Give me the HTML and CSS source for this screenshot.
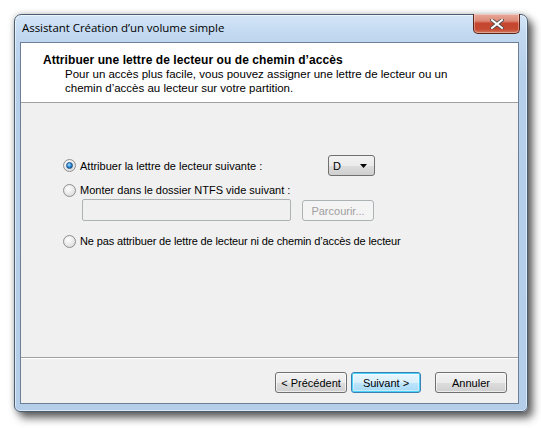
FILE: index.html
```html
<!DOCTYPE html>
<html lang="fr">
<head>
<meta charset="utf-8">
<link rel="stylesheet" href="styles.css">
</head>
<body>
<div class="window">
  <div class="titlebar">
    <span class="title">Assistant Création d’un volume simple</span>
    <button class="close" aria-label="Fermer">
      <svg width="14" height="10" viewBox="0 0 14 10"><path d="M2 1 L12 9 M12 1 L2 9" stroke="#4a4a4a" stroke-width="3.6" stroke-linecap="square"/><path d="M2 1 L12 9 M12 1 L2 9" stroke="#ffffff" stroke-width="2" stroke-linecap="square"/></svg>
    </button>
  </div>
  <div class="client">
    <div class="header">
      <div class="h-title">Attribuer une lettre de lecteur ou de chemin d’accès</div>
      <div class="h-sub">Pour un accès plus facile, vous pouvez assigner une lettre de lecteur ou un<br>chemin d’accès au lecteur sur votre partition.</div>
    </div>
    <div class="main">
      <div class="row row1">
        <span class="radio checked"></span>
        <span class="label">Attribuer la lettre de lecteur suivante :</span>
        <div class="combo"><span class="combo-text">D</span><svg class="arrow" width="7" height="4" viewBox="0 0 7 4"><path d="M0 0 H7 L3.5 4 Z" fill="#000"/></svg></div>
      </div>
      <div class="row row2">
        <span class="radio"></span>
        <span class="label">Monter dans le dossier NTFS vide suivant :</span>
      </div>
      <div class="row row3">
        <div class="textbox"></div>
        <div class="btn disabled">Parcourir...</div>
      </div>
      <div class="row row4">
        <span class="radio"></span>
        <span class="label narrow">Ne pas attribuer de lettre de lecteur ni de chemin d’accès de lecteur</span>
      </div>
    </div>
    <div class="footer">
      <div class="btn">&lt; Précédent</div>
      <div class="btn default">Suivant &gt;</div>
      <div class="btn cancel">Annuler</div>
    </div>
  </div>
</div>
</body>
</html>
```
FILE: styles.css
```css
* { box-sizing: border-box; }
html, body { margin: 0; padding: 0; background: #ffffff; }
body { width: 541px; height: 428px; overflow: hidden; font-family: "Liberation Sans", Arial, sans-serif; font-size: 11px; color: #000; }

.window {
  margin: 14px 0 0 14px;
  width: 514px;
  height: 398px;
  border: 1px solid #4a5e74;
  border-radius: 7px 7px 6px 6px;
  background: linear-gradient(to bottom, #d4e5f7 0px, #c1d8f0 20px, #b6cfea 60px, #b4cde9 100%);
  box-shadow: 5px 6px 9px rgba(0,0,0,0.6), 0 0 6px rgba(0,0,0,0.25), inset 0 0 0 1px rgba(255,255,255,0.55);
  display: flex;
  flex-direction: column;
  padding: 0 8px 7px 5px;
}

.titlebar {
  height: 27px;
  display: flex;
  align-items: flex-start;
  flex: none;
}
.title {
  font-family: "Open Sans", "Noto Sans", sans-serif;
  font-size: 11.5px;
  color: #000;
  margin: 5px 0 0 2px;
  letter-spacing: -0.05px;
}
.close {
  margin-left: auto;
  width: 47px;
  height: 20px;
  padding: 0;
  margin-top: -1px;
  margin-right: -1px;
  border: 1px solid #5b2418;
  border-top: none;
  border-radius: 0 0 5px 5px;
  background: linear-gradient(to bottom, #e9a99b 0%, #dd8c79 35%, #c6452f 50%, #c44a31 80%, #d4785e 100%);
  box-shadow: inset 0 0 0 1px rgba(255,255,255,0.35);
  display: flex;
  align-items: center;
  justify-content: center;
}

.client {
  flex: 1;
  border: 1px solid #6c7f96;
  background: #f0f0f0;
  display: flex;
  flex-direction: column;
}

.header {
  background: #ffffff;
  height: 60px;
  border-bottom: 1px solid #a0a0a0;
  padding: 10px 0 0 22px;
  flex: none;
}
.h-title { font-weight: bold; line-height: 14px; font-size: 12px; letter-spacing: 0.07px; }
.h-sub { line-height: 14px; padding-left: 22px; font-size: 11.5px; }

.main {
  flex: 1;
  padding: 52px 0 0 42px;
  display: flex;
  flex-direction: column;
}
.row { display: flex; align-items: center; }
.row1 { width: 312px; height: 21px; }
.row2 { height: 14px; margin-top: 7px; }
.row3 { margin-top: 2px; padding-left: 19px; align-items: flex-start; }
.row4 { height: 14px; margin-top: 13px; }

.label { margin-left: 4px; line-height: 14px; white-space: nowrap; }
.label.narrow { letter-spacing: -0.13px; }

.radio {
  width: 13px;
  height: 13px;
  border-radius: 50%;
  border: 1px solid #8f8f8f;
  background: radial-gradient(circle at 40% 35%, #ffffff 0%, #eeeeee 40%, #d2d2d2 100%);
  flex: none;
  position: relative;
}
.radio.checked::after {
  content: "";
  position: absolute;
  left: 2px; top: 2px;
  width: 7px; height: 7px;
  border-radius: 50%;
  background: radial-gradient(circle at 40% 35%, #a9e2ff 0%, #2b8ad6 50%, #12518f 100%);
  border: 1px solid #1a4f86;
  box-sizing: border-box;
}

.combo {
  margin-left: auto;
  width: 47px;
  height: 21px;
  border: 1px solid #707070;
  border-radius: 3px;
  background: linear-gradient(to bottom, #f2f2f2 0%, #ebebeb 50%, #dddddd 51%, #cfcfcf 100%);
  display: flex;
  align-items: center;
  padding: 0 7px 0 4px;
}
.combo-text { line-height: 14px; }
.arrow { margin-left: auto; }

.textbox {
  width: 209px;
  height: 22px;
  border: 1px solid #adb2b5;
  border-radius: 2px;
  background: #f0f0f0;
}

.btn {
  width: 72px;
  height: 21px;
  border: 1px solid #707070;
  border-radius: 3px;
  background: linear-gradient(to bottom, #f2f2f2 0%, #ebebeb 50%, #dddddd 51%, #cfcfcf 100%);
  box-shadow: inset 0 0 0 1px rgba(255,255,255,0.6);
  display: flex;
  align-items: center;
  justify-content: center;
  line-height: 14px;
  white-space: nowrap;
}
.btn.disabled {
  margin-left: 11px;
  margin-top: 1px;
  border-color: #adb2b5;
  background: #f4f4f4;
  color: #a0a0a0;
  box-shadow: none;
}
.btn.default {
  width: 70px;
  margin-left: 4px;
  border-color: #3c7fb1;
  box-shadow: inset 0 0 0 1px #4ad3fa, inset 0 0 0 2px rgba(255,255,255,0.4);
  background: linear-gradient(to bottom, #eaf6fd 0%, #d9f0fc 50%, #bee6fd 51%, #a7d9f5 100%);
}
.btn.cancel { margin-left: 14px; }

.footer {
  flex: none;
  border-top: 1px solid #a0a0a0;
  box-shadow: inset 0 1px 0 #ffffff;
  display: flex;
  justify-content: flex-end;
  padding: 14px 11px 10px 0;
}
```
